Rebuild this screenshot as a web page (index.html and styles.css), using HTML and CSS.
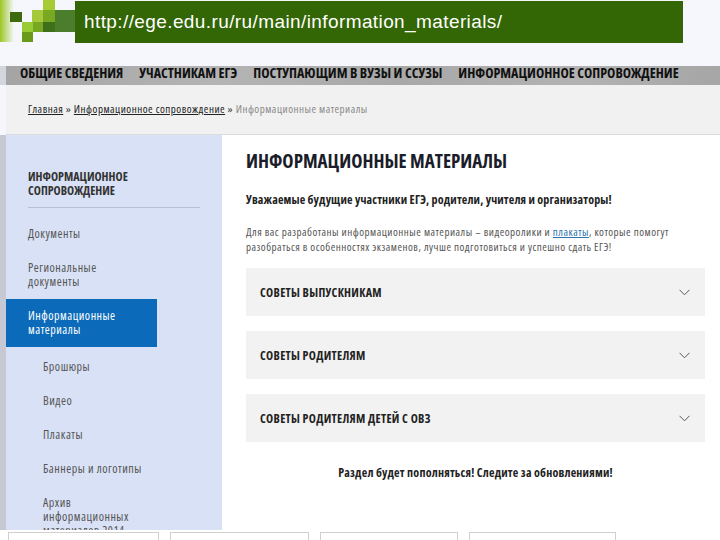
FILE: index.html
```html
<!DOCTYPE html>
<html lang="ru">
<head>
<meta charset="utf-8">
<title>Информационные материалы</title>
<link rel="stylesheet" href="styles.css">
</head>
<body>
<div class="slide">
  <header class="slide-head">
    <svg class="logo" width="75" height="44" viewBox="0 0 75 44">
      <defs>
        <linearGradient id="lg" x1="0" x2="1" y1="0" y2="0">
          <stop offset="0" stop-color="#9dc624"/>
          <stop offset="1" stop-color="#f5f7fd"/>
        </linearGradient>
      </defs>
      <rect x="0" y="0" width="14" height="42" fill="url(#lg)"/>
      <rect x="55" y="10" width="20" height="22" fill="#4a7e2c"/>
      <rect x="43" y="0" width="12" height="10" fill="#a7cb34"/>
      <rect x="43" y="10" width="12" height="12" fill="#79a822"/>
      <rect x="43" y="22" width="12" height="10" fill="#3e6f1a"/>
      <rect x="10" y="12" width="12" height="10" fill="#3d6a0c"/>
      <rect x="32" y="10" width="11" height="12" fill="#a5c93a"/>
      <rect x="22" y="22" width="11" height="10" fill="#99cc33"/>
      <rect x="33" y="22" width="10" height="10" fill="#77a822"/>
      <rect x="22" y="32" width="11" height="10" fill="#6a9a1a"/>
    </svg>
    <div class="url-bar">http://ege.edu.ru/ru/main/information_materials/</div>
  </header>

  <div class="shot">
    <nav class="topnav">
      <span>ОБЩИЕ СВЕДЕНИЯ</span>
      <span>УЧАСТНИКАМ ЕГЭ</span>
      <span>ПОСТУПАЮЩИМ В ВУЗЫ И ССУЗЫ</span>
      <span>ИНФОРМАЦИОННОЕ СОПРОВОЖДЕНИЕ</span>
    </nav>
    <div class="crumbs">
      <a href="#">Главная</a> » <a href="#">Информационное сопровождение</a> » <span class="cur">Информационные материалы</span>
    </div>
    <div class="body-row">
      <aside class="sidebar">
        <div class="side-title">ИНФОРМАЦИОННОЕ<br>СОПРОВОЖДЕНИЕ</div>
        <ul class="side-list">
          <li class="side-item">Документы</li>
          <li class="side-item">Региональные<br>документы</li>
          <li class="side-item active">Информационные<br>материалы</li>
        </ul>
        <ul class="sub-list">
          <li class="sub-item">Брошюры</li>
          <li class="sub-item">Видео</li>
          <li class="sub-item">Плакаты</li>
          <li class="sub-item">Баннеры и логотипы</li>
          <li class="sub-item">Архив<br>информационных<br>материалов 2014</li>
        </ul>
      </aside>
      <main class="content">
        <h1 class="title">ИНФОРМАЦИОННЫЕ МАТЕРИАЛЫ</h1>
        <p class="lead">Уважаемые будущие участники ЕГЭ, родители, учителя и организаторы!</p>
        <p class="text">Для вас разработаны информационные материалы – видеоролики и <a href="#">плакаты</a>, которые помогут<br>разобраться в особенностях экзаменов, лучше подготовиться и успешно сдать ЕГЭ!</p>
        <div class="acc">
          <div class="acc-item"><span>СОВЕТЫ ВЫПУСКНИКАМ</span><svg class="chev" width="11" height="7" viewBox="0 0 11 7"><polyline points="0.5,0.8 5.5,5.8 10.5,0.8" fill="none" stroke="#555" stroke-width="1"/></svg></div>
          <div class="acc-item"><span>СОВЕТЫ РОДИТЕЛЯМ</span><svg class="chev" width="11" height="7" viewBox="0 0 11 7"><polyline points="0.5,0.8 5.5,5.8 10.5,0.8" fill="none" stroke="#555" stroke-width="1"/></svg></div>
          <div class="acc-item"><span>СОВЕТЫ РОДИТЕЛЯМ ДЕТЕЙ С ОВЗ</span><svg class="chev" width="11" height="7" viewBox="0 0 11 7"><polyline points="0.5,0.8 5.5,5.8 10.5,0.8" fill="none" stroke="#555" stroke-width="1"/></svg></div>
        </div>
        <p class="note">Раздел будет пополняться! Следите за обновлениями!</p>
      </main>
    </div>
    <div class="foot-row">
      <div class="fbox w1"></div>
      <div class="fbox w2"></div>
      <div class="fbox w3"></div>
      <div class="fbox w4"></div>
    </div>
  </div>
</div>
</body>
</html>
```

FILE: styles.css
```css
* { box-sizing: border-box; }
html, body { margin: 0; padding: 0; }
body {
  width: 720px;
  height: 540px;
  overflow: hidden;
  background: #f5f7fd;
  font-family: "Liberation Sans", Arial, sans-serif;
}
.slide { width: 720px; height: 540px; display: flex; flex-direction: column; }

.slide-head { display: flex; height: 44px; align-items: flex-start; }
.logo { display: block; flex: none; }
.url-bar {
  margin-top: 1px;
  width: 608px;
  height: 42px;
  background: #336604;
  color: #fff;
  font-family: "Liberation Sans", Arial, sans-serif;
  font-size: 19px;
  line-height: 42px;
  padding-left: 9px;
  letter-spacing: 0.4px;
}

.shot { margin-top: 22px; display: flex; flex-direction: column; flex: 1; }

.topnav {
  height: 19px;
  background: #adadad linear-gradient(100deg, #a4a4a4 0%, #b4b4b4 30%, #a8a8a8 55%, #b2b2b2 80%, #a6a6a6 100%);
  border-left: 6px solid #d4d6de;
  padding-left: 14px;
  display: flex;
  gap: 16px;
  font-family: "Open Sans", "Liberation Sans", sans-serif;
  font-stretch: 75%;
  font-weight: bold;
  font-size: 14px;
  line-height: 14px;
  color: #111;
  white-space: nowrap;
}
.topnav span { display: block; }

.crumbs {
  height: 50px;
  margin-left: 6px;
  background: #f1f1f1;
  border-bottom: 1px solid #dcdcdc;
  padding-left: 22px;
  padding-top: 17px;
  font-family: "Open Sans", "Liberation Sans", sans-serif;
  font-stretch: 75%;
  font-size: 11px;
  letter-spacing: 0.5px;
  line-height: 14px;
  color: #333;
  white-space: nowrap;
}
.crumbs a { color: #222; text-decoration: underline; }
.crumbs .cur { color: #8a8a8a; }

.body-row { display: flex; height: 395px; }

.sidebar {
  width: 222px;
  flex: none;
  background: #d9e1f6;
  border-left: 6px solid #c6c9d4;
  padding-top: 35px;
  font-family: "Open Sans", "Liberation Sans", sans-serif;
  font-stretch: 75%;
  font-size: 12px;
  letter-spacing: 0.5px;
  line-height: 14px;
  color: #555;
  overflow: hidden;
}
.side-title {
  margin-left: 22px;
  width: 172px;
  font-weight: bold;
  letter-spacing: 0;
  color: #333;
  padding-bottom: 9px;
  border-bottom: 1px solid #b9bfd2;
}
.side-list, .sub-list { list-style: none; margin: 0; padding: 0; }
.side-list { margin-top: 9px; }
.side-item { padding: 10px 0 10px 22px; width: 151px; }
.side-item.active { background: #0b6bba; color: #fff; }
.sub-list { margin-top: 3px; }
.sub-item { padding: 10px 0 10px 37px; }

.content {
  flex: 1;
  background: #fff;
  padding: 14px 15px 0 24px;
  font-family: "Open Sans", "Liberation Sans", sans-serif;
  font-stretch: 75%;
}
.title {
  margin: 0;
  font-size: 19px;
  line-height: 24px;
  font-weight: bold;
  color: #1b1d2a;
}
.lead {
  margin: 19px 0 0;
  font-size: 12px;
  line-height: 16px;
  font-weight: bold;
  letter-spacing: 0.15px;
  color: #222;
  white-space: nowrap;
}
.text {
  margin: 16px 0 0;
  font-size: 11px;
  line-height: 15px;
  letter-spacing: 0.5px;
  color: #555;
  white-space: nowrap;
}
.text a { color: #2b74ad; }

.acc { margin-top: 14px; display: flex; flex-direction: column; gap: 15px; }
.acc-item {
  height: 48px;
  background: #f2f2f2;
  display: flex;
  align-items: center;
  justify-content: space-between;
  padding: 0 15px 0 14px;
  font-size: 12px;
  font-weight: bold;
  letter-spacing: 0.3px;
  color: #222;
}
.chev { display: block; }

.note {
  margin: 24px 0 0;
  text-align: center;
  font-size: 12px;
  line-height: 14px;
  font-weight: bold;
  letter-spacing: 0.2px;
  color: #222;
}

.foot-row {
  flex: 1;
  background: #fff;
  display: flex;
  gap: 11px;
  padding: 2px 0 0 8px;
}
.fbox { border: 1px solid #d0d0d0; border-bottom: none; height: 12px; }
.w1 { width: 151px; }
.w2 { width: 139px; }
.w3 { width: 138px; }
.w4 { width: 147px; }
```
